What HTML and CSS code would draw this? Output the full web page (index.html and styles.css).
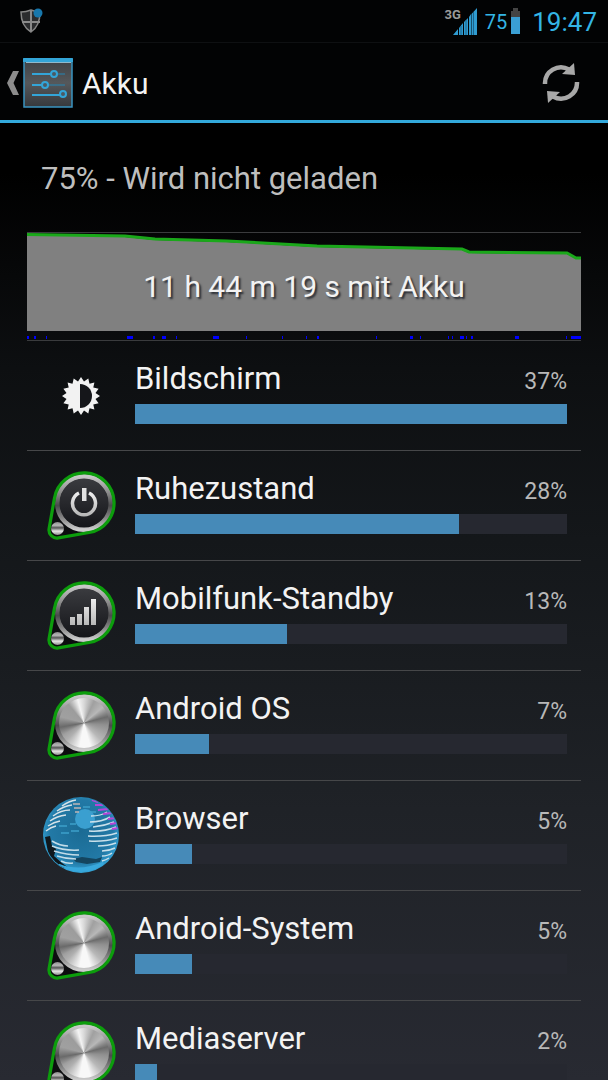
FILE: index.html
```
<!DOCTYPE html>
<html lang="de">
<head>
  <meta charset="UTF-8">
  <meta name="viewport" content="width=device-width, initial-scale=1.0">
  <title>Akku</title>
  <link rel="stylesheet" href="styles.css">
</head>
<body>
  <!-- shared icon shapes -->
  <svg class="defs" width="0" height="0" aria-hidden="true">
    <defs>
      <linearGradient id="rim" x1="0" y1="0" x2="0" y2="1">
        <stop offset="0" stop-color="#c8c8c8"/>
        <stop offset="0.3" stop-color="#8c8c8c"/>
        <stop offset="0.55" stop-color="#4a4a4c"/>
        <stop offset="0.8" stop-color="#8c8c8c"/>
        <stop offset="1" stop-color="#cccccc"/>
      </linearGradient>
      <linearGradient id="face" x1="0" y1="0" x2="0" y2="1">
        <stop offset="0" stop-color="#3a3b3f"/>
        <stop offset="1" stop-color="#141519"/>
      </linearGradient>
      <linearGradient id="bead" x1="0" y1="0" x2="0" y2="1">
        <stop offset="0" stop-color="#8a8a8a"/>
        <stop offset="0.25" stop-color="#b8b8b8"/>
        <stop offset="0.45" stop-color="#555555"/>
        <stop offset="0.7" stop-color="#e8e8e8"/>
        <stop offset="1" stop-color="#8c8c8c"/>
      </linearGradient>
      <linearGradient id="glyph" x1="0" y1="0" x2="0" y2="1">
        <stop offset="0" stop-color="#eeeeee"/>
        <stop offset="1" stop-color="#b8b8b8"/>
      </linearGradient>
      <symbol id="knob" viewBox="0 0 74 72">
        <path d="M9.5 26.9A30 30 0 1 1 44.1 61.5L13.4 66.9A8 8 0 0 1 4.1 57.6Z" fill="#0c0d0f"/>
        <circle cx="39" cy="32" r="26.500" fill="none" stroke="url(#rim)" stroke-width="5"/>
        <circle cx="12.500" cy="57.500" r="6.500" fill="url(#bead)"/>
        <path d="M9.500 26.900A30 30 0 1 1 44.100 61.500L13.400 66.900A8 8 0 0 1 4.100 57.600Z" fill="none" stroke="#0c9d0c" stroke-width="3.200"/>
      </symbol>
    </defs>
  </svg>

  <div class="status-bar">
    <svg class="shield" width="24" height="26" viewBox="0 0 24 26">
      <path d="M2 4Q7 4 12 2Q17 4 21 4Q21 18 12 24Q2 18 2 4Z" fill="#2b2c2e" stroke="#858585" stroke-width="1.500"/>
      <path d="M12 3V23M3 14H21" stroke="#8a8a8a" stroke-width="2"/>
      <circle cx="19" cy="5" r="4.500" fill="#1878ad"/>
    </svg>
    <div class="status-icons">
      <div class="signal">
        <span class="network">3G</span>
        <svg width="24" height="27" viewBox="0 0 24 27">
          <path d="M0 27L5 21V27ZM6 27V20L10 15V27ZM11 27V14L15 10V27ZM16 27V9L18 6V27ZM18.500 27V6L24 0V27Z" fill="#2f9bd0"/>
          <path d="M8 18V27M13 12V27M20.500 4V27" stroke="#1b628a" stroke-width="1"/>
        </svg>
      </div>
      <span class="level">75</span>
      <svg class="battery" width="9" height="26" viewBox="0 0 9 26">
        <path d="M2 0H7V3H9V9H0V3H2Z" fill="#444"/>
        <path d="M0 9H9V26H0Z" fill="#3a9fd4"/>
      </svg>
      <span class="clock">19:47</span>
    </div>
  </div>

  <header class="action-bar">
    <a class="up" href="#" aria-label="Nach oben">
      <svg width="12" height="24" viewBox="0 0 12 24">
        <path d="M6 0H12L6.500 12L12 24H6L0 12Z" fill="#8c8c8c"/>
      </svg>
      <svg width="50" height="50" viewBox="0 0 50 50">
        <defs>
          <linearGradient id="panel" x1="0" y1="0" x2="0" y2="1">
            <stop offset="0" stop-color="#3e4145"/>
            <stop offset="0.5" stop-color="#55585b"/>
            <stop offset="1" stop-color="#36383c"/>
          </linearGradient>
        </defs>
        <rect x="1" y="1" width="48" height="48" fill="url(#panel)" stroke="#3a94c0" stroke-width="1.500"/>
        <path d="M0 1Q0 0 1 0H49Q50 0 50 1V4H0Z" fill="#33a5d8"/>
        <path d="M3 4.500H48" stroke="#8fb9cc" stroke-width="1"/>
        <path d="M9 16H42M9 27H42M9 37H42" stroke="#2486b5" stroke-width="1"/>
        <path d="M9 16H28M9 27H19M9 37H37" stroke="#33a5d8" stroke-width="2"/>
        <circle cx="31" cy="16" r="3" fill="#4a5a64" stroke="#33a5d8" stroke-width="2"/>
        <circle cx="22" cy="27" r="3" fill="#4a5a64" stroke="#33a5d8" stroke-width="2"/>
        <circle cx="40" cy="36" r="3" fill="#4a5a64" stroke="#33a5d8" stroke-width="2"/>
      </svg>
    </a>
    <h1>Akku</h1>
    <button class="refresh" type="button" aria-label="Aktualisieren">
      <svg width="38" height="40" viewBox="0 0 38 40">
        <path d="M3 21A16 16 0 0 1 27 6.500" fill="none" stroke="#a8a8a8" stroke-width="4.500"/>
        <path d="M32 0L33 12L20 11Z" fill="#a8a8a8"/>
        <path d="M35 19A16 16 0 0 1 11 33.500" fill="none" stroke="#a8a8a8" stroke-width="4.500"/>
        <path d="M6 40L5 28L18 29Z" fill="#a8a8a8"/>
      </svg>
    </button>
  </header>

  <main class="content">
    <h2 class="summary">75% - Wird nicht geladen</h2>

    <div class="chart">
      <svg class="graph" viewBox="0 0 554 98" preserveAspectRatio="none">
        <path d="M0 1L98 4L128 7L200 9L290 14L435 17L442 20L540 21L549 25H554V98H0Z" fill="#808080"/>
        <path d="M0 1.500L98 3L128 6L200 8L290 13L435 16L442 19L540 20L549 25H554" fill="none" stroke="#1aa81a" stroke-width="3"/>
      </svg>
      <p class="duration">11 h 44 m 19 s mit Akku</p>
      <svg class="activity" viewBox="0 0 554 9" preserveAspectRatio="none">
        <path d="M0 6.500H2M7 6.500H9M19 6.500H20M100 6.500H106M126 6.500H128M135 6.500H139M149 6.500H150M186 6.500H192M219 6.500H220M255 6.500H256M279 6.500H280M290 6.500H292M349 6.500H350M383 6.500H386M393 6.500H394M421 6.500H422M425 6.500H426M433 6.500H437M439 6.500H440M444 6.500H446M488 6.500H492M539 6.500H540M544 6.500H554" stroke="#0000ff" stroke-width="3"/>
      </svg>
    </div>

    <ul class="usage">
      <li>
        <div class="icon">
          <svg class="sun" width="38" height="38" viewBox="-19 -19 38 38">
            <path d="M0 -19L3 -14.500L7.300 -17.600L8.500 -12.300L13.400 -13.400L12.300 -8.500L17.600 -7.300L14.500 -3L19 0L14.500 3L17.600 7.300L12.300 8.500L13.400 13.400L8.500 12.300L7.300 17.600L3 14.500L0 19L-3 14.500L-7.300 17.600L-8.500 12.300L-13.400 13.400L-12.300 8.500L-17.600 7.300L-14.500 3L-19 0L-14.500 -3L-17.600 -7.300L-12.300 -8.500L-13.400 -13.400L-8.500 -12.300L-7.300 -17.600L-3 -14.500Z" fill="#f2f2f2"/>
            <path d="M-1 -12A12 12 0 0 1 -1 12Z" fill="#15161a"/>
          </svg>
        </div>
        <div class="info">
          <div class="label"><span class="name">Bildschirm</span><span class="percent">37%</span></div>
          <div class="bar"><div class="fill" style="width: 100%"></div></div>
        </div>
      </li>
      <li>
        <div class="icon">
          <svg width="76" height="74" viewBox="-2 -2 76 74">
            <use href="#knob" width="74" height="72"/>
            <circle cx="39" cy="32" r="24.500" fill="url(#face)"/>
            <path d="M34 22A11.500 11.500 0 1 0 44 22" fill="none" stroke="url(#glyph)" stroke-width="3.500"/>
            <path d="M37 17H41.500V30H37Z" fill="#e2e2e2"/>
          </svg>
        </div>
        <div class="info">
          <div class="label"><span class="name">Ruhezustand</span><span class="percent">28%</span></div>
          <div class="bar"><div class="fill" style="width: 75%"></div></div>
        </div>
      </li>
      <li>
        <div class="icon">
          <svg width="76" height="74" viewBox="-2 -2 76 74">
            <use href="#knob" width="74" height="72"/>
            <circle cx="39" cy="32" r="24.500" fill="url(#face)"/>
            <path d="M25 36H30V44H25ZM32 33H37V44H32ZM39 26H44V44H39ZM46 18H51V44H46Z" fill="url(#glyph)"/>
          </svg>
        </div>
        <div class="info">
          <div class="label"><span class="name">Mobilfunk-Standby</span><span class="percent">13%</span></div>
          <div class="bar"><div class="fill" style="width: 35.2%"></div></div>
        </div>
      </li>
      <li>
        <div class="icon">
          <svg width="76" height="74" viewBox="-2 -2 76 74"><use href="#knob" width="74" height="72"/></svg>
          <span class="disc"></span>
        </div>
        <div class="info">
          <div class="label"><span class="name">Android OS</span><span class="percent">7%</span></div>
          <div class="bar"><div class="fill" style="width: 17.2%"></div></div>
        </div>
      </li>
      <li>
        <div class="icon">
          <svg width="78" height="80" viewBox="0 0 78 80">
            <defs>
              <radialGradient id="sea" cx="0.5" cy="0.45" r="0.55">
                <stop offset="0" stop-color="#1b6b94"/>
                <stop offset="0.75" stop-color="#2279a6"/>
                <stop offset="1" stop-color="#35a5d8"/>
              </radialGradient>
              <clipPath id="ball"><circle cx="39" cy="39" r="37"/></clipPath>
            </defs>
            <circle cx="39" cy="39" r="38" fill="url(#sea)"/>
            <g clip-path="url(#ball)" fill="none">
              <circle cx="43" cy="23" r="10" fill="#3a9fd0"/>
              <path d="M3 41L8 40L10 50L14 53L12 60L20 67L27 72L18 72L7 61Z" fill="#10181d"/>
              <path d="M31 63L40 61L54 63L60 61L58 66L45 68L34 66Z" fill="#14455f"/>
              <path d="M16 70Q38 79 62 68" stroke="#38a8dc" stroke-width="5"/>
              <!-- bands of land -->
              <path d="M20 10Q27 5 34 4M15 15Q22 10 30 9M11 20Q19 14 28 14M8 25Q15 20 24 19M6 30Q12 26 18 25M4 35Q9 31 14 30" stroke="#d5e2e8" stroke-width="1.500"/>
              <path d="M31 8H38M32 12H39M33 16H37" stroke="#bfb5b5" stroke-width="1.500"/>
              <path d="M10 45Q18 50 26 50M10 50Q22 55 37 54M12 55Q25 59 37 59M15 60Q24 63 34 63M19 65Q25 68 31 67" stroke="#c3dce8" stroke-width="1.500"/>
              <path d="M49 20Q59 20 65 16M48 26Q60 26 68 21M51 31Q62 30 72 26M47 35Q62 36 74 31M46 40Q62 41 75 37M47 45Q62 46 75 42M56 50Q66 50 74 47M60 55Q67 55 73 52M60 60Q66 60 70 57M60 65Q64 64 67 62" stroke="#c9e0ea" stroke-width="1.500"/>
              <path d="M50 4L56 6M53 9L61 9M56 14L66 13M61 18L70 17M66 23L73 22M68 28L75 27M70 33L76 32" stroke="#b745d8" stroke-width="2"/>
              <path d="M17 30H25M28 28H34M19 37H27M29 35H37M34 22H39M41 11H48M46 16H54" stroke="#3da0ca" stroke-width="1.500"/>
            </g>
          </svg>
        </div>
        <div class="info">
          <div class="label"><span class="name">Browser</span><span class="percent">5%</span></div>
          <div class="bar"><div class="fill" style="width: 13.2%"></div></div>
        </div>
      </li>
      <li>
        <div class="icon">
          <svg width="76" height="74" viewBox="-2 -2 76 74"><use href="#knob" width="74" height="72"/></svg>
          <span class="disc"></span>
        </div>
        <div class="info">
          <div class="label"><span class="name">Android-System</span><span class="percent">5%</span></div>
          <div class="bar"><div class="fill" style="width: 13.2%"></div></div>
        </div>
      </li>
      <li>
        <div class="icon">
          <svg width="76" height="74" viewBox="-2 -2 76 74"><use href="#knob" width="74" height="72"/></svg>
          <span class="disc"></span>
        </div>
        <div class="info">
          <div class="label"><span class="name">Mediaserver</span><span class="percent">2%</span></div>
          <div class="bar"><div class="fill" style="width: 5.1%"></div></div>
        </div>
      </li>
    </ul>
  </main>
</body>
</html>
```

FILE: styles.css
```
* {
  box-sizing: border-box;
}

body {
  margin: 0;
  height: 100vh;
  overflow: hidden;
  display: flex;
  flex-direction: column;
  background: linear-gradient(#000000 16%, #0d0f11 34%, #14171a 50%, #1f2227 75%, #282a32 100%);
  color: #f3f3f3;
  font-family: Roboto, "Noto Sans", sans-serif;
}

h1, h2, p, ul {
  margin: 0;
  padding: 0;
  font-weight: normal;
}

svg {
  display: block;
}

.defs {
  position: absolute;
}

/* status bar */
.status-bar {
  flex: none;
  height: 43px;
  padding: 0 11px 0 19px;
  display: flex;
  align-items: center;
  justify-content: space-between;
  border-bottom: 1px solid #0e1012;
  background: #020304;
}

.status-icons {
  display: flex;
  align-items: center;
  color: #33b5e5;
}

.signal {
  display: flex;
  align-items: flex-start;
}

.network {
  margin-right: -8px;
  color: #9a9a9a;
  font-size: 13px;
  line-height: 14px;
  font-weight: bold;
}

.level {
  margin: 0 4px 0 8px;
  padding-top: 2px;
  font-size: 20px;
}

.clock {
  margin-left: 12px;
  padding-top: 2px;
  font-size: 26px;
}

/* action bar */
.action-bar {
  flex: none;
  height: 80px;
  padding: 2px 28px 0 7px;
  display: flex;
  align-items: center;
  border-bottom: 3px solid #33a9dc;
  background: #020304;
}

.up {
  display: flex;
  align-items: center;
  gap: 4px;
}

.action-bar h1 {
  flex: 1;
  padding: 2px 0 0 9px;
  font-size: 30px;
}

.refresh {
  padding: 0;
  border: none;
  background: none;
  cursor: pointer;
}

/* content */
.content {
  flex: 1;
  min-height: 0;
  padding: 0 27px;
  overflow: hidden;
}

.summary {
  height: 109px;
  padding-left: 14px;
  color: #bebebe;
  font-size: 31px;
  line-height: 112px;
}

.chart {
  display: grid;
  border-top: 1px solid #3a3b3d;
  border-bottom: 1px solid #3a3b3d;
}

.graph,
.duration {
  grid-area: 1 / 1;
  width: 100%;
  height: 98px;
}

.duration {
  padding-top: 9px;
  font-size: 30px;
  line-height: 90px;
  text-align: center;
  text-shadow: 2px 2px 2px #2a2d33;
}

.activity {
  width: 100%;
  height: 9px;
}

/* usage list */
.usage {
  list-style: none;
}

.usage li {
  height: 110px;
  display: flex;
  align-items: center;
  border-bottom: 1px solid #464749;
}

.icon {
  width: 108px;
  display: grid;
  place-items: center;
}

.icon svg,
.disc {
  grid-area: 1 / 1;
}

.disc {
  width: 50px;
  height: 50px;
  margin: 0 0 6px 6px;
  border-radius: 50%;
  background: conic-gradient(#d8d8d8 0deg, #a0a0a0 25deg, #b8b8b8 50deg, #6c6c6c 75deg, #909090 95deg, #b8b8b8 135deg, #f8f8f8 165deg, #f8f8f8 190deg, #b0b0b0 225deg, #a0a0a0 240deg, #6a6a6a 260deg, #a0a0a0 285deg, #9c9c9c 320deg, #f4f4f4 345deg, #d8d8d8 360deg);
}

.info {
  flex: 1;
  padding-right: 14px;
}

.label {
  display: flex;
  align-items: baseline;
  justify-content: space-between;
}

.name {
  font-size: 31px;
  line-height: 40px;
}

.percent {
  color: #b8b8b8;
  font-size: 23px;
}

.bar {
  height: 20px;
  margin: 5px 0 8px;
  background: #262830;
}

.fill {
  height: 100%;
  background: #468ab8;
}
```
